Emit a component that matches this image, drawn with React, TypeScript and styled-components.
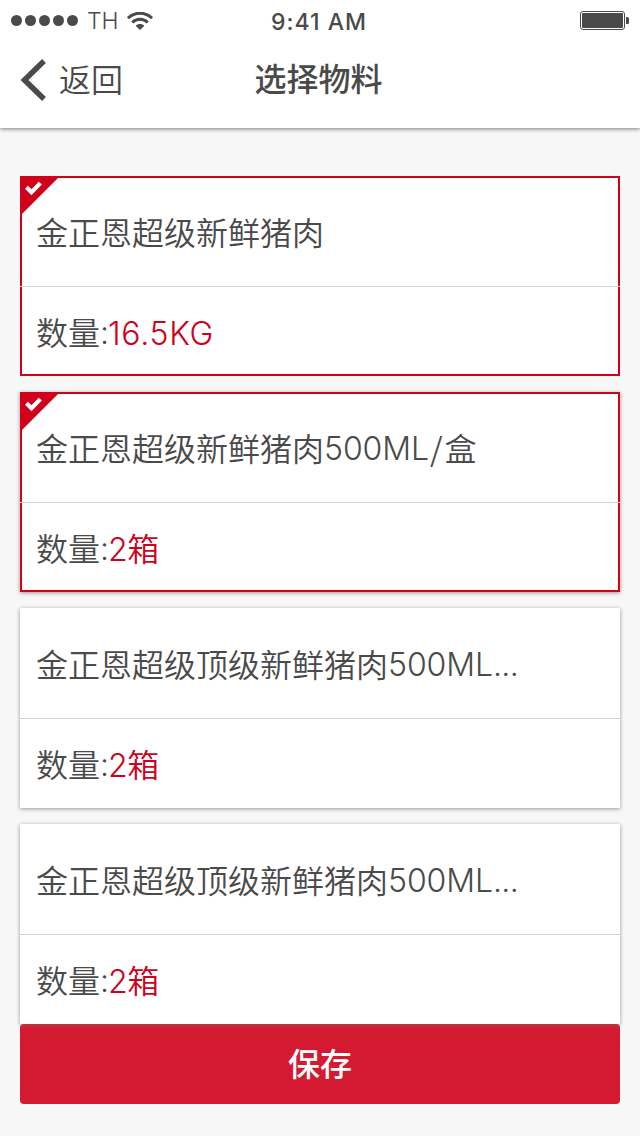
import React from "react";
import styled, { createGlobalStyle, css } from "styled-components";

const ink = "#4a4a4a";
const red = "#d0021b";

const GlobalStyle = createGlobalStyle`
  body {
    margin: 0;
    background: #f7f7f7;
    color: ${ink};
    font-family: "Noto Sans CJK SC", sans-serif;
    -webkit-font-smoothing: antialiased;
  }
`;

const Screen = styled.main`
  width: 640px;
  height: 1136px;
  overflow: hidden;
  background: #f7f7f7;
`;

const Header = styled.header`
  height: 128px;
  background: #fff;
  box-shadow: 0 1px 4px rgba(0, 0, 0, 0.5);
`;

const StatusBar = styled.div`
  display: grid;
  grid-template-columns: 1fr auto 1fr;
  align-items: center;
  height: 40px;
  padding: 0 11px;
  box-sizing: border-box;
  font-family: Inter, sans-serif;
`;

const Carrier = styled.div`
  display: flex;
  align-items: center;
  font-size: 23px;
  line-height: 40px;
`;

const Signal = styled.div`
  display: flex;
  gap: 3px;
  margin-right: 9px;
`;

const Dot = styled.i`
  width: 11px;
  height: 11px;
  border-radius: 50%;
  background: ${ink};
`;

const CarrierName = styled.span`
  width: 32px;
  margin-right: 8px;
  padding-top: 1px;
  font-weight: 350;
`;

const Clock = styled.div`
  padding: 3px 2px 0 0;
  font-size: 23px;
  font-weight: 500;
  letter-spacing: 1px;
  line-height: 37px;
`;

const BatterySlot = styled.div`
  display: flex;
  justify-content: flex-end;
`;

const NavBar = styled.nav`
  display: grid;
  grid-template-columns: 1fr auto 1fr;
  align-items: center;
  height: 80px;
  padding: 0 20px;
  font-size: 32px;
`;

const BackLink = styled.a`
  display: flex;
  align-items: center;
  gap: 13px;
  line-height: 80px;
  font-weight: 350;
`;

const BackLabel = styled.span`
  height: 80px;
  line-height: 77px;
`;

const Title = styled.h1`
  margin: 0;
  padding: 0 3px 6px 0;
  font-size: 32px;
  font-weight: 500;
  line-height: 74px;
`;

const List = styled.section`
  display: flex;
  flex-direction: column;
  gap: 16px;
  padding: 48px 20px 0;
`;

const Card = styled.article<{ $raised: boolean }>`
  position: relative;
  height: 200px;
  background: #fff;
  box-shadow: ${(p) => (p.$raised ? "0 1px 4px rgba(0, 0, 0, 0.4)" : "none")};
`;

const redSides = css`
  border: 2px solid ${red};
  padding: 0 14px 2px;
`;

const NameRow = styled.div<{ $selected: boolean }>`
  display: flex;
  align-items: center;
  box-sizing: border-box;
  height: 110px;
  padding: 0 16px;
  font-size: 32px;
  font-weight: 350;
  white-space: pre;
  ${(p) => p.$selected && redSides}
  border-bottom: 0;
`;

const Divider = styled.hr`
  height: 1px;
  margin: 0;
  border: 0;
  background: #d4d4d4;
`;

const AmountRow = styled(NameRow)`
  height: 89px;
  padding-top: 0;
  padding-bottom: ${(p) => (p.$selected ? 0 : 2)}px;
  border-top: 0;
  border-bottom: ${(p) => (p.$selected ? `2px solid ${red}` : "0")};
`;

const Amount = styled.span`
  margin-left: -1px;
  color: ${red};
`;

const Latin = styled.span<{ $track?: number }>`
  font-family: Inter, sans-serif;
  font-weight: 350;
  letter-spacing: ${(p) => p.$track ?? 0}px;
  padding-top: 3px;
`;

const Slash = styled.span`
  margin: 0 2px 0 1px;
`;

const Corner = styled.svg`
  position: absolute;
  top: 0;
  left: 0;
`;

const SaveBar = styled.footer`
  position: relative;
  padding: 0 20px;
`;

const SaveButton = styled.button`
  display: block;
  width: 600px;
  height: 80px;
  padding: 0 0 4px;
  border: 0;
  border-radius: 4px;
  background: linear-gradient(#ac3d49, #c8273a 2px, #d41a30 5px);
  color: #fff;
  font-family: inherit;
  font-size: 32px;
  font-weight: 500;
  line-height: 76px;
`;

const WifiIcon = () => (
  <svg width="26" height="18" viewBox="0 0 26 18" fill="none" stroke={ink}>
    <path d="M1 6.2C7.7-.4 18.3-.4 25 6.2" strokeWidth="3" />
    <path d="M5.2 10.5c4.4-4.3 11.2-4.3 15.6 0" strokeWidth="3" />
    <path d="M8.6 13.8c2.4-2.3 6.4-2.3 8.8 0L13 18z" fill={ink} stroke="none" />
  </svg>
);

const BatteryIcon = () => (
  <svg width="49" height="19" viewBox="0 0 49 19" fill={ink}>
    <rect x=".5" y=".5" width="44" height="18" rx="2.5" fill="none" stroke={ink} />
    <rect x="2" y="2" width="41" height="15" rx="1" />
    <path d="M46 6h1.5a1.5 1.5 0 0 1 1.5 1.5v4a1.5 1.5 0 0 1-1.5 1.5H46z" />
  </svg>
);

const BackIcon = () => (
  <svg width="26" height="42" viewBox="0 0 26 42" fill="none" stroke={ink}>
    <path d="M24 2 4.5 21 24 40" strokeWidth="5.5" />
  </svg>
);

const SelectedCorner = () => (
  <Corner width="40" height="40" viewBox="0 0 40 40">
    <path d="M0 0h40L0 40z" fill={red} />
    <path d="M6.5 11.2l5 5L20.3 7.1" fill="none" stroke="#fff" strokeWidth="4.2" />
  </Corner>
);

type Item = {
  name: string;
  size?: string;
  truncated?: boolean;
  unit?: string;
  count: string;
  measure?: string;
  selected: boolean;
  raised: boolean;
};

const items: Item[] = [
  { name: "金正恩超级新鲜猪肉", count: "16.5KG", selected: true, raised: false },
  { name: "金正恩超级新鲜猪肉", size: "500ML", unit: "盒", count: "2", measure: "箱", selected: true, raised: true },
  { name: "金正恩超级顶级新鲜猪肉", size: "500ML", truncated: true, count: "2", measure: "箱", selected: false, raised: true },
  { name: "金正恩超级顶级新鲜猪肉", size: "500ML", truncated: true, count: "2", measure: "箱", selected: false, raised: true },
];

export default function App() {
  return (
    <Screen>
      <GlobalStyle />
      <Header>
        <StatusBar>
          <Carrier>
            <Signal>
              {[0, 1, 2, 3, 4].map((n) => (
                <Dot key={n} />
              ))}
            </Signal>
            <CarrierName>TH</CarrierName>
            <WifiIcon />
          </Carrier>
          <Clock>9:41 AM</Clock>
          <BatterySlot>
            <BatteryIcon />
          </BatterySlot>
        </StatusBar>
        <NavBar>
          <BackLink>
            <BackIcon />
            <BackLabel>返回</BackLabel>
          </BackLink>
          <Title>选择物料</Title>
        </NavBar>
      </Header>
      <List>
        {items.map((item, i) => (
          <Card key={i} $raised={item.raised}>
            <NameRow $selected={item.selected}>
              {item.name}
              {item.size && <Latin $track={-0.1}>{item.size}</Latin>}
              {item.truncated && <Latin $track={-0.6}>...</Latin>}
              {item.unit && <Slash>/</Slash>}
              {item.unit}
            </NameRow>
            <Divider />
            <AmountRow $selected={item.selected}>
              数量<Latin>:</Latin>
              <Amount>
                <Latin $track={item.measure ? -0.5 : 0.7}>{item.count}</Latin>
                {item.measure}
              </Amount>
            </AmountRow>
            {item.selected && <SelectedCorner />}
          </Card>
        ))}
      </List>
      <SaveBar>
        <SaveButton>保存</SaveButton>
      </SaveBar>
    </Screen>
  );
}
